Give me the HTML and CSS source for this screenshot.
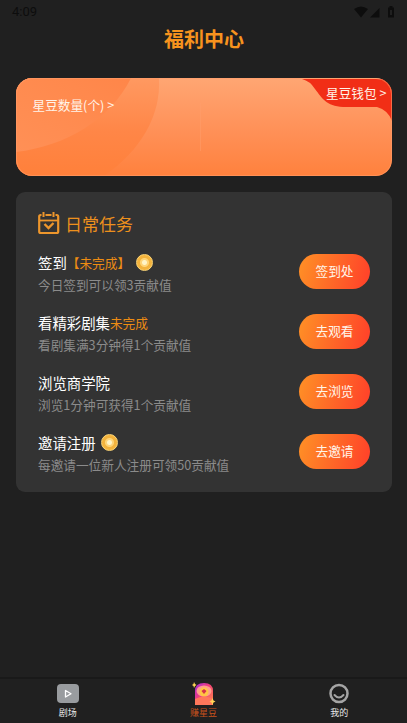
FILE: index.html
```html
<!DOCTYPE html>
<html lang="zh-CN">
<head>
<meta charset="utf-8">
<title>福利中心</title>
<link rel="stylesheet" href="styles.css">
</head>
<body>
<div class="app">
  <div class="status">
    <span>4:09</span>
    <svg width="42" height="12" viewBox="0 0 42 12"><path d="M0 3Q7-2 14 3L7 11.500zM25.500 2V11.500H16zM34 1.500h1.500V0h3v1.500H40V11.500h-6zm2 2.500v5h2V4z" fill-rule="evenodd"/></svg>
  </div>
  <h1 class="title">福利中心</h1>

  <section class="wallet">
    <svg class="wallet-art" viewBox="0 0 376 98">
      <defs>
        <linearGradient id="base" x2="0" y2="1"><stop stop-color="#ffa673"/><stop offset=".55" stop-color="#ff9057"/><stop offset="1" stop-color="#ff813d"/></linearGradient>
        <linearGradient id="wave" x2="0" y2="1"><stop stop-color="#ff9961"/><stop offset=".55" stop-color="#ff8647"/><stop offset="1" stop-color="#ff803a"/></linearGradient>
        <linearGradient id="leaf" x1="0" y1="1" x2="1" y2="0"><stop stop-color="#ff9056"/><stop offset="1" stop-color="#ff8649"/></linearGradient>
      </defs>
      <path fill="url(#base)" d="M0 0h376v98H0z"/>
      <path fill="url(#wave)" d="M0 0H143C145 38 125 72 88 98H0z"/>
      <path fill="url(#leaf)" d="M0 0H115C94 42 50 68 0 74z"/>
      <path d="M184.500 25v48" stroke="#ff9e6c" opacity=".5"/>
      <path fill="#f12e16" d="M286 1H376V43Q372 32 361 29H327C310 28 306 20 299 11Q294 3 286 1z"/>
      <rect x=".5" y=".5" width="375" height="97" rx="15.500" fill="none" stroke="#ff9c6c" stroke-opacity=".55"/>
    </svg>
    <span class="count">星豆数量(个) &gt;</span>
    <span class="purse">星豆钱包 &gt;</span>
  </section>

  <section class="tasks">
    <h2 class="heading">
      <svg width="22" height="24" viewBox="0 0 22 24" fill="none" stroke="#ed962c"><rect x="1.200" y="4" width="19" height="18" rx="1.500" stroke-width="2.200"/><path d="M2 9.500h18" stroke-width="1.800"/><path d="M5.500 1v6M15.500 1v6" stroke="#333" stroke-width="4"/><path d="M5.500 1v5M15.500 1v5" stroke-width="2"/><path d="M6.500 13l4 4 5-5" stroke-width="2.400"/></svg>
      日常任务
    </h2>
    <div class="task">
      <div><div class="name">签到<em>【未完成】</em><i class="coin wide"></i></div><p>今日签到可以领3贡献值</p></div>
      <button>签到处</button>
    </div>
    <div class="task">
      <div><div class="name">看精彩剧集<em>未完成</em></div><p>看剧集满3分钟得1个贡献值</p></div>
      <button>去观看</button>
    </div>
    <div class="task">
      <div><div class="name">浏览商学院</div><p>浏览1分钟可获得1个贡献值</p></div>
      <button>去浏览</button>
    </div>
    <div class="task">
      <div><div class="name">邀请注册<i class="coin"></i></div><p>每邀请一位新人注册可领50贡献值</p></div>
      <button>去邀请</button>
    </div>
  </section>

  <nav class="tabs">
    <div class="tab">
      <svg width="24" height="24" viewBox="0 0 24 24"><rect x="1" y="2" width="22" height="19" rx="4" fill="#999c9f"/><path d="M9.500 8.500v6.500l5.500-3.250z" fill="none" stroke="#fff" stroke-width="1.300" stroke-linejoin="round"/></svg>
      <span>剧场</span>
    </div>
    <div class="tab active">
      <svg width="24" height="24" viewBox="0 0 24 24">
        <defs><linearGradient id="gift" x1="0" y1="0" x2="1" y2="1"><stop stop-color="#a52ae0"/><stop offset=".45" stop-color="#f23e78"/><stop offset="1" stop-color="#ff9244"/></linearGradient></defs>
        <path d="M3 23V9Q3 1 12 1T21 9V23z" fill="url(#gift)"/>
        <ellipse cx="12" cy="9" rx="7.500" ry="5.500" fill="#ff9e8c"/><circle cx="12" cy="10" r="4.500" fill="#ffc544"/><path d="M9.500 9l2.500 3 2.500-3-2.500-2z" fill="#d6324b"/>
        <path d="M3 23v-6q9-5 18 0v6z" fill="#ff775b"/>
        <path d="M2 0l1 2 1.500 1L3 4 2 6 1.500 4 0 3l1.500-1zM20.500 16l1 2.500 2 1-2 1-1 2.500-1-2.500-2-1 2-1z" fill="#ffd456"/>
      </svg>
      <span>赚星豆</span>
    </div>
    <div class="tab">
      <svg width="24" height="24" viewBox="0 0 24 24" fill="none" stroke="#a5a5a5"><circle cx="12" cy="11.500" r="8.500" stroke-width="2.500"/><path d="M7.500 13q4.500 5 9 0" stroke-width="2" stroke-linecap="round"/></svg>
      <span>我的</span>
    </div>
  </nav>
</div>
</body>
</html>
```
FILE: styles.css
```css
* { box-sizing: border-box; }
body { margin: 0; background: #202020; font-family: "Noto Sans CJK SC", "Noto Sans", sans-serif; }
h1, h2, p { margin: 0; font-weight: 400; }
.app { height: 723px; display: flex; flex-direction: column; overflow: hidden; }
.status { height: 23px; flex: none; padding: 0 11px 0 12px; display: flex; align-items: center; justify-content: space-between; font: 13px Roboto, sans-serif; color: #0d0d0d; }
.status svg { fill: #0d0d0d; }
.title { height: 55px; flex: none; font-size: 20px; line-height: 32px; font-weight: 700; text-align: center; color: #f7931e; padding-left: 1px; }
.wallet { position: relative; flex: none; height: 98px; margin: 0 15px 0 16px; border-radius: 16px; overflow: hidden; display: flex; justify-content: space-between; color: #fff4e9; font-size: 12.67px; line-height: 18px; }
.wallet-art { position: absolute; inset: 0; width: 100%; height: 100%; }
.count, .purse { position: relative; }
.count { padding: 18px 0 0 16.500px; }
.purse { padding: 6px 5.500px 0 0; }
.tasks { flex: none; height: 300px; margin: 16px 15px 0 16px; padding: 19px 22px 0; border-radius: 9px; background: #333; }
.heading { display: flex; align-items: center; gap: 5px; height: 24px; font-size: 17px; color: #ed901d; }
.task { display: flex; align-items: center; justify-content: space-between; height: 60px; }
.heading + .task { margin-top: 6px; }
.name { display: flex; align-items: center; height: 22px; margin-top: 5px; font-size: 14.4px; line-height: 22px; color: #fff; }
.name em { font-style: normal; font-size: 12.67px; color: #ed8c13; }
.task p { height: 22px; font-size: 12.67px; line-height: 22px; color: #8b8b8b; }
.task button { width: 71px; height: 35px; padding: 0 0 1px; border: 0; border-radius: 18px; background: linear-gradient(105deg, #ff8b26 8%, #ff4529 92%); color: #fff5ea; font-family: inherit; font-size: 12.67px; }
.coin { width: 17px; height: 17px; margin-left: 5px; border-radius: 50%; border: 1px solid #ffd777; background: radial-gradient(circle, #fff4c7 0 2px, #ffd578 3px 4px, #f3b33d 5px); }
.coin.wide { margin-left: 6px; }
.tabs { flex: none; height: 46px; margin-top: auto; border-top: 2px solid #191919; display: flex; }
.tab { flex: 1; padding-top: 3px; display: flex; flex-direction: column; align-items: center; color: #e7e7e7; font-size: 9px; line-height: 14px; }
.tab svg { flex: none; }
.tab.active { color: #c8521c; }
```
